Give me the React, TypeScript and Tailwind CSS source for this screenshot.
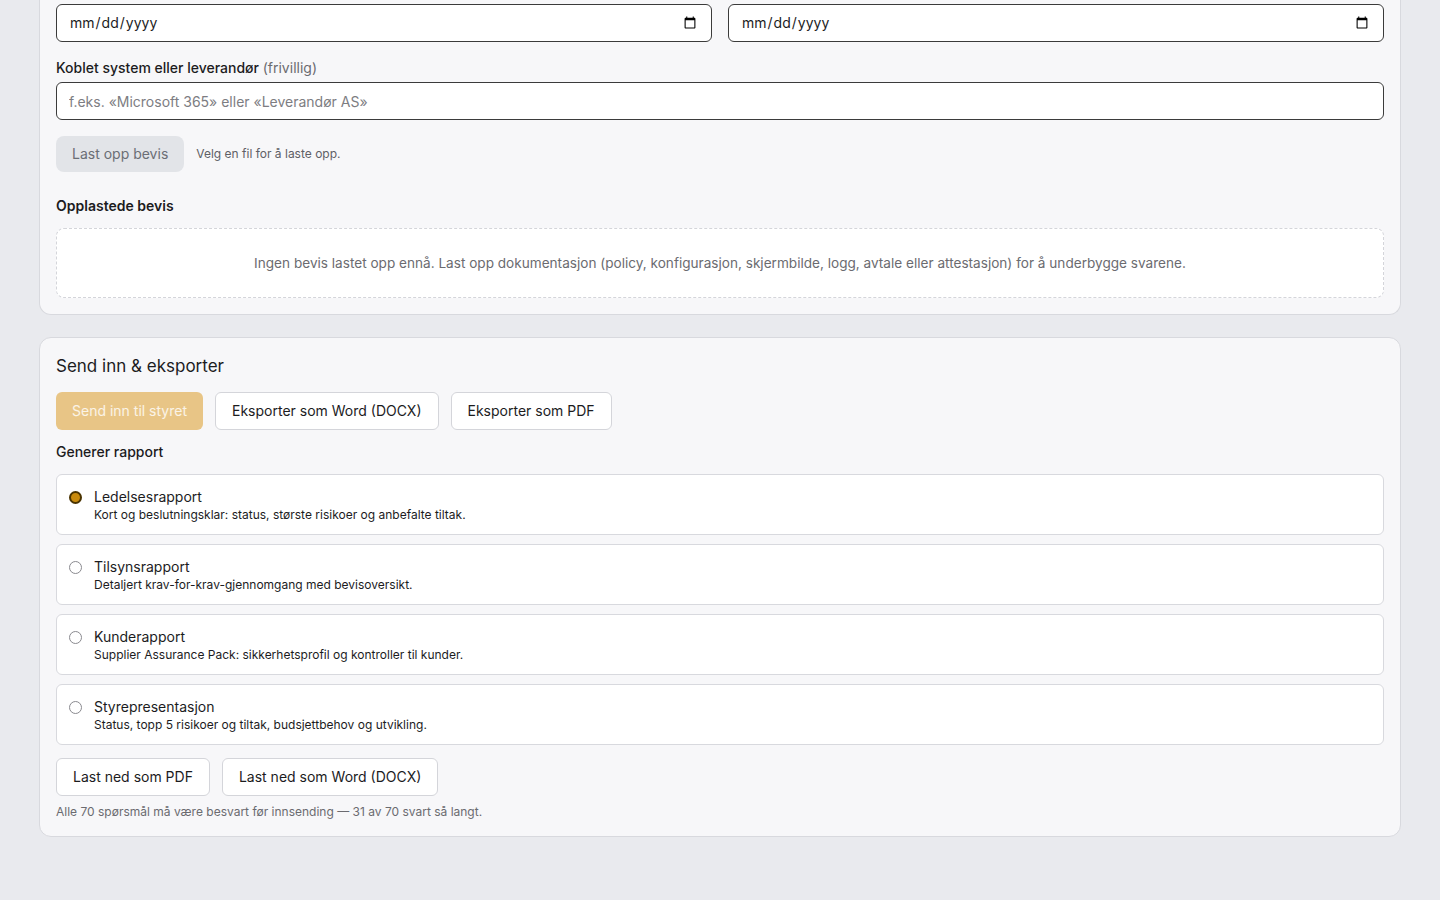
import { useState } from "react";

const reports = [
  { id: "ledelse", title: "Ledelsesrapport", desc: "Kort og beslutningsklar: status, største risikoer og anbefalte tiltak." },
  { id: "tilsyn", title: "Tilsynsrapport", desc: "Detaljert krav-for-krav-gjennomgang med bevisoversikt." },
  { id: "kunde", title: "Kunderapport", desc: "Supplier Assurance Pack: sikkerhetsprofil og kontroller til kunder." },
  { id: "styre", title: "Styrepresentasjon", desc: "Status, topp 5 risikoer og tiltak, budsjettbehov og utvikling." },
];

export default function App() {
  const [report, setReport] = useState("ledelse");

  return (
    <div className="min-h-[900px] bg-[#e9eaee] px-[39px] pb-16 font-['Inter',sans-serif] text-[#1c1c1e] antialiased">
      {/* Evidence card (scrolled, top cut off) */}
      <div className="rounded-b-xl border border-t-0 border-[#d8d9de] bg-[#f7f7f9] px-4 pb-4 pt-1">
        <div className="grid grid-cols-2 gap-4">
          <input
            type="date"
            className="h-[38px] rounded-md border border-[#3b3b3b] bg-white px-3 text-sm text-[#1c1c1e]"
          />
          <input
            type="date"
            className="h-[38px] rounded-md border border-[#3b3b3b] bg-white px-3 text-sm text-[#1c1c1e]"
          />
        </div>

        <label className="mt-4 block text-sm font-medium leading-5">
          Koblet system eller leverandør <span className="font-normal text-[#6b6b70]">(frivillig)</span>
        </label>
        <input
          type="text"
          placeholder="f.eks. «Microsoft 365» eller «Leverandør AS»"
          className="mt-1 h-[38px] w-full rounded-md border border-[#3b3b3b] bg-white px-3 text-sm placeholder:text-[#7d7d82]"
        />

        <div className="mt-4 flex items-center gap-3">
          <button className="h-9 rounded-lg bg-[#e2e4e8] px-4 text-sm text-[#6b6e75]">Last opp bevis</button>
          <span className="text-xs text-[#5f6066]">Velg en fil for å laste opp.</span>
        </div>

        <h3 className="mt-6 text-sm font-semibold leading-5">Opplastede bevis</h3>
        <div className="mt-3 flex h-[70px] items-center justify-center rounded-lg border border-dashed border-[#d4d5da] bg-white text-[13.6px] text-[#6b6b70]">
          Ingen bevis lastet opp ennå. Last opp dokumentasjon (policy, konfigurasjon, skjermbilde, logg, avtale eller attestasjon) for å underbygge svarene.
        </div>
      </div>

      {/* Submit & export */}
      <div className="mt-[22px] rounded-xl border border-[#d8d9de] bg-[#f7f7f9] px-4 pb-4 pt-4">
        <h2 className="text-[17px] leading-6">Send inn &amp; eksporter</h2>

        <div className="mt-[14px] flex gap-3">
          <button disabled className="h-[38px] rounded-md bg-[#e8c586] px-4 text-sm text-white/80">
            Send inn til styret
          </button>
          <button className="h-[38px] rounded-md border border-[#d4d5da] bg-white px-4 text-sm">
            Eksporter som Word (DOCX)
          </button>
          <button className="h-[38px] rounded-md border border-[#d4d5da] bg-white px-4 text-sm">
            Eksporter som PDF
          </button>
        </div>

        <h3 className="mt-3 text-sm font-medium leading-5">Generer rapport</h3>

        <div className="mt-3 flex flex-col gap-[9px]">
          {reports.map((r) => {
            const checked = report === r.id;
            return (
              <label
                key={r.id}
                onClick={() => setReport(r.id)}
                className="flex h-[61px] cursor-pointer items-start gap-3 rounded-md border border-[#d8d9de] bg-white pl-3 pr-3 pt-[12px]"
              >
                <span className="flex h-5 w-[13px] items-center justify-center">
                  {checked ? (
                    <span className="h-[13px] w-[13px] shrink-0 rounded-full border-2 border-[#4a3300] bg-[#c98a0c]" />
                  ) : (
                    <span className="h-[13px] w-[13px] shrink-0 rounded-full border border-[#8a8a8f] bg-white" />
                  )}
                </span>
                <span className="flex flex-col">
                  <span className="text-sm leading-5">{r.title}</span>
                  <span className="text-xs leading-4">{r.desc}</span>
                </span>
              </label>
            );
          })}
        </div>

        <div className="mt-[13px] flex gap-3">
          <button className="h-[38px] rounded-md border border-[#d4d5da] bg-white px-4 text-sm">Last ned som PDF</button>
          <button className="h-[38px] rounded-md border border-[#d4d5da] bg-white px-4 text-sm">Last ned som Word (DOCX)</button>
        </div>

        <p className="mt-2 text-xs leading-4 text-[#6b6b70]">
          Alle 70 spørsmål må være besvart før innsending — 31 av 70 svart så langt.
        </p>
      </div>
    </div>
  );
}
